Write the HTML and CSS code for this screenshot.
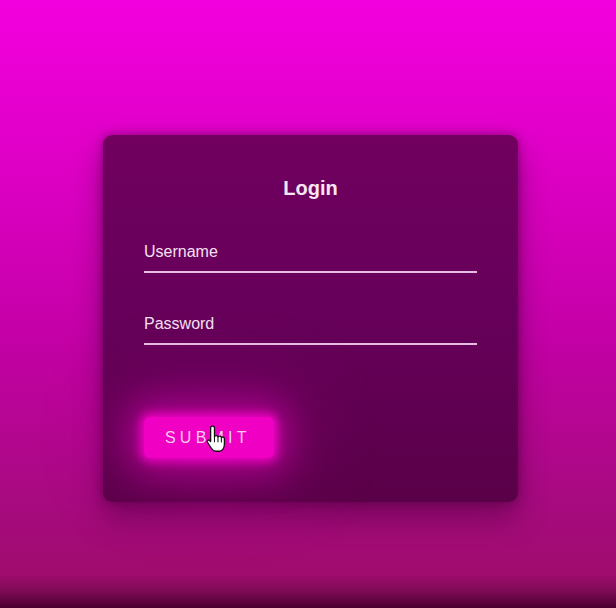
FILE: index.html
```html
<!DOCTYPE html>
<html lang="en">
<head>
<meta charset="utf-8">
<title>Login</title>
<link rel="stylesheet" href="styles.css">
</head>
<body>
<main class="page">
  <form class="card">
    <h1 class="title">Login</h1>
    <div class="field"><span class="label">Username</span></div>
    <div class="field field-second"><span class="label">Password</span></div>
    <div class="actions">
      <button type="button" class="submit">SUBMIT</button>
      <svg class="cursor" width="20" height="28" viewBox="0 0 17 24" aria-hidden="true">
        <path d="M5.5 1c1 0 1.7.7 1.7 1.6v7.2c.4-1 2.7-1 3 .4.5-1 2.6-.9 2.9.6.6-.9 2.5-.6 2.6.9v4.6c0 3.2-1.7 6.2-4.6 6.2H8.4c-1.8 0-2.8-1-4-2.8L1.2 14.8c-.7-1.1.4-2.4 1.6-1.7l1.1 1V2.6C3.9 1.7 4.6 1 5.5 1z" fill="#fff" stroke="#111" stroke-width="1.1" stroke-linejoin="round"/>
        <path d="M7.2 9.8v5M10.2 10.2v4.6M13.1 10.9v4" stroke="#111" stroke-width="0.9" fill="none"/>
      </svg>
    </div>
  </form>
</main>
</body>
</html>
```

FILE: styles.css
```css
* { box-sizing: border-box; }

html, body {
  margin: 0;
  padding: 0;
  height: 608px;
}

body {
  font-family: "Liberation Sans", Arial, sans-serif;
  background: linear-gradient(to bottom,
    #f300de 0px,
    #df00c6 160px,
    #c500a8 330px,
    #a80a80 500px,
    #9e0c6c 575px,
    #7c0a55 592px,
    #4a002e 608px);
  overflow: hidden;
}

.page {
  display: flex;
  justify-content: flex-start;
  padding: 135px 0 0 103px;
}

.card {
  width: 415px;
  height: 367px;
  border-radius: 9px;
  background: linear-gradient(to bottom, #71005f 0%, #66005a 50%, #5a0048 100%);
  box-shadow: 0 0 10px rgba(70, 0, 60, 0.55), 0 16px 30px rgba(60, 0, 50, 0.45);
  padding: 41px 41px 44px;
  display: flex;
  flex-direction: column;
}

.title {
  margin: 0;
  font-size: 20px;
  line-height: 24px;
  font-weight: 700;
  color: #f6e6f4;
  text-align: center;
}

.field {
  margin-top: 42px;
  height: 31px;
  padding-bottom: 9px;
  border-bottom: 2px solid #e8bde4;
}

.field-second {
  margin-top: 41px;
}

.label {
  display: block;
  font-size: 16px;
  line-height: 20px;
  color: #f4e2f2;
}

.actions {
  margin-top: 72px;
  position: relative;
  display: flex;
}

.submit {
  width: 130px;
  height: 41px;
  border: none;
  border-radius: 6px;
  background: #f000c2;
  color: #f6cdee;
  font-family: "Liberation Sans", Arial, sans-serif;
  font-size: 16px;
  letter-spacing: 4.2px;
  text-align: left;
  padding: 0 0 0 21px;
  box-shadow: 0 0 10px 4px rgba(245, 0, 200, 0.9), 0 0 36px 14px rgba(235, 0, 195, 0.5), 0 0 80px 24px rgba(210, 0, 175, 0.25);
}

.cursor {
  position: absolute;
  left: 62px;
  top: 8px;
}
```
